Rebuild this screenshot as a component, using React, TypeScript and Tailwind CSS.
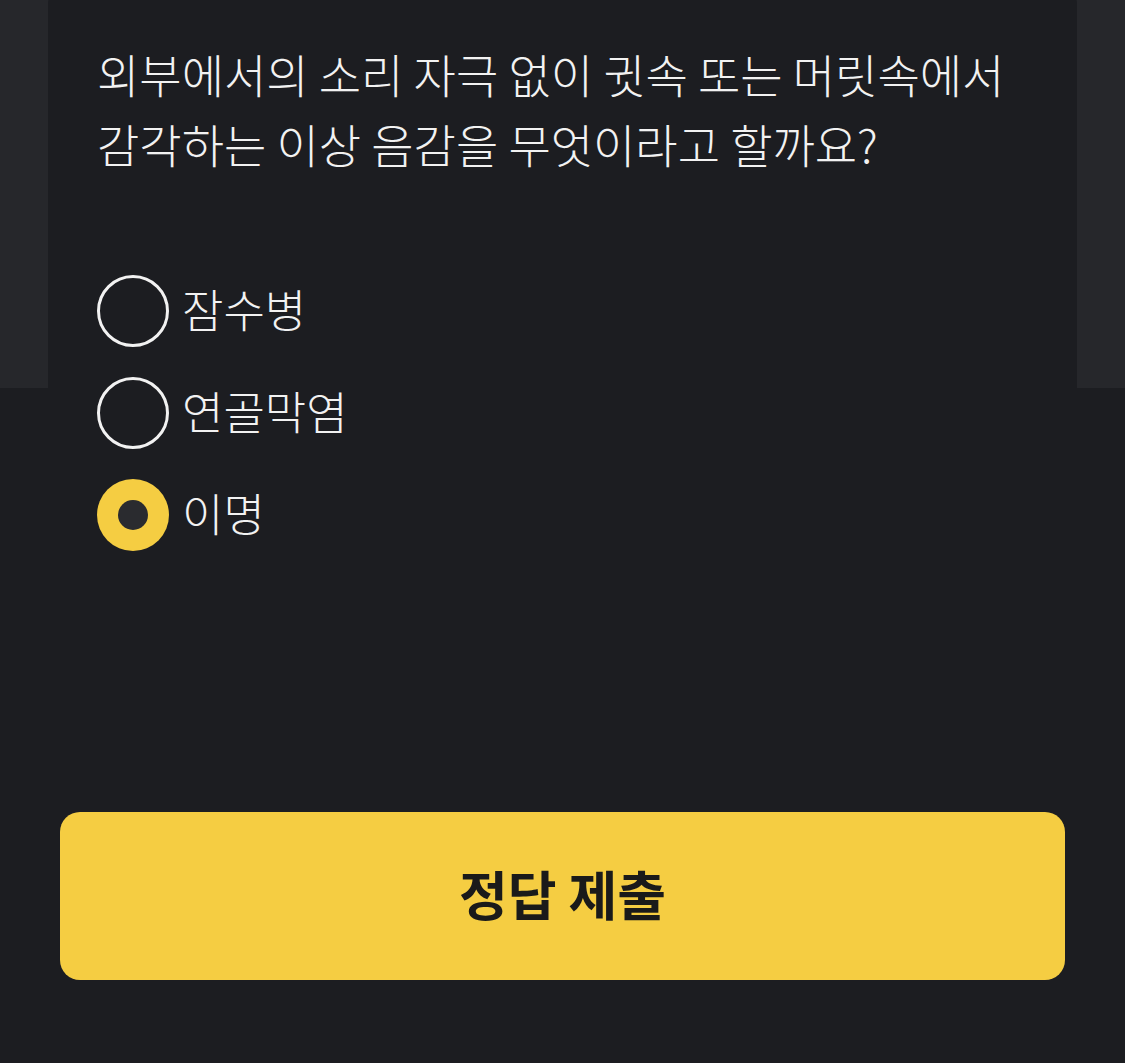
import React from "react";

const font = { fontFamily: '"Noto Sans CJK KR", "Noto Sans", sans-serif' };

function Radio({ selected }: { selected?: boolean }) {
  if (selected) {
    return (
      <div className="w-[72px] h-[72px] rounded-full bg-[#f5cd42] flex items-center justify-center shrink-0">
        <div className="w-[30px] h-[30px] rounded-full bg-[#2a2b2f]" />
      </div>
    );
  }
  return <div className="w-[72px] h-[72px] rounded-full border-[3px] border-[#f2f2f2] shrink-0" />;
}

export default function App() {
  const options = [
    { label: "잠수병", selected: false },
    { label: "연골막염", selected: false },
    { label: "이명", selected: true },
  ];
  return (
    <div className="relative w-[1125px] h-[1063px] bg-[#1c1d21] overflow-hidden" style={font}>
      <div className="absolute top-0 left-0 right-0 h-[388px] bg-[#26272b]" />
      <div className="relative mx-[48px] -mt-[12px] rounded-t-[16px] bg-[#1c1d21] pt-[50px] px-[49px]">
        <p className="text-[46px] leading-[70px] font-light text-[#f2f2f2] whitespace-nowrap">
          외부에서의 소리 자극 없이 귓속 또는 머릿속에서
          <br />
          감각하는 이상 음감을 무엇이라고 할까요?
        </p>
        <div className="mt-[97px] flex flex-col gap-[30px]">
          {options.map((o) => (
            <div key={o.label} className="flex items-center gap-[13px]">
              <Radio selected={o.selected} />
              <span className="text-[45px] font-light text-[#f2f2f2] leading-none -mt-[6px]">{o.label}</span>
            </div>
          ))}
        </div>
      </div>
      <div className="relative mx-[60px] mt-[261px] h-[168px] rounded-[20px] bg-[#f5cd42] flex items-center justify-center">
        <span className="text-[53px] font-bold text-[#1a1a1a] leading-none -mt-[6px]">정답 제출</span>
      </div>
    </div>
  );
}
